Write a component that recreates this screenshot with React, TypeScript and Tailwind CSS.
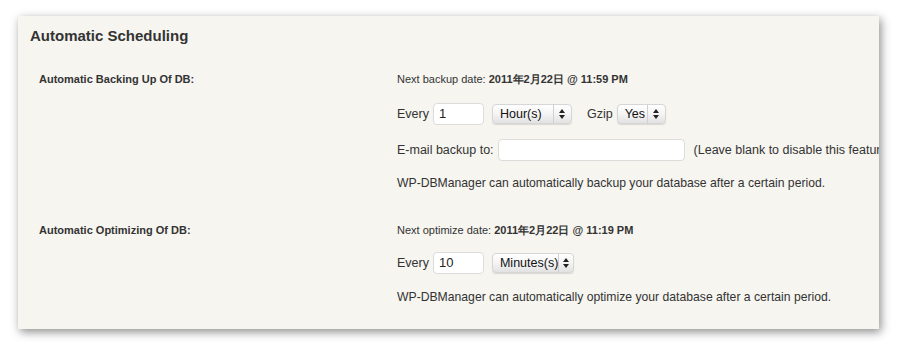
import React from "react";

function Arrows() {
  return (
    <svg width="6" height="10" viewBox="0 0 6 10" className="block">
      <path d="M3 0 L6 4 L0 4 Z" fill="#222" />
      <path d="M0 6 L6 6 L3 10 Z" fill="#222" />
    </svg>
  );
}

function FakeSelect({ label, width }: { label: string; width: string }) {
  return (
    <div
      className={`${width} h-[20px] flex items-center rounded-[4px] border border-[#d6d6d6] bg-gradient-to-b from-[#ffffff] via-[#f4f4f4] to-[#e2e2e2] shadow-[0_1px_1px_rgba(0,0,0,0.12)] text-[12.5px] text-[#111]`}
    >
      <span className="flex-1 pl-[7px] leading-none">{label}</span>
      <span className="h-full w-px bg-[#d0d0d0]" />
      <span className="w-[17px] flex justify-center">
        <Arrows />
      </span>
    </div>
  );
}

function TextBox({ value, width }: { value?: string; width: string }) {
  return (
    <div
      className={`${width} h-[22px] flex items-center rounded-[4px] border border-[#dcdcdc] bg-white px-[5px] text-[13px] text-[#222]`}
    >
      {value}
    </div>
  );
}

export default function App() {
  return (
    <div className="w-[898px] h-[348px] bg-white pt-[16px] pl-[18px] overflow-hidden font-['Liberation_Sans',Arial,sans-serif] text-[#333]">
      <div className="w-[861px] h-[313px] bg-[#f6f5f0] shadow-[2px_3px_9px_rgba(0,0,0,0.45)] overflow-hidden">
        <h2 className="pl-[12px] pt-[11px] text-[15px] font-bold text-[#333] leading-[18px]">
          Automatic Scheduling
        </h2>

        <div className="flex pt-[27px]">
          <div className="w-[379px] shrink-0 pl-[21px] text-[11px] font-bold leading-[14px]">
            Automatic Backing Up Of DB:
          </div>
          <div className="flex flex-col whitespace-nowrap">
            <div className="text-[11px] leading-[14px]">
              Next backup date: <b>2011年2月22日 @ 11:59 PM</b>
            </div>
            <div className="flex items-center mt-[17px] text-[12.5px]">
              <span className="mr-[4px]">Every</span>
              <TextBox value="1" width="w-[51px]" />
              <div className="ml-[8px]">
                <FakeSelect label="Hour(s)" width="w-[80px]" />
              </div>
              <span className="ml-[15px] mr-[4px]">Gzip</span>
              <FakeSelect label="Yes" width="w-[49px]" />
            </div>
            <div className="flex items-center mt-[14px] text-[12.5px]">
              <span className="mr-[4px]">E-mail backup to:</span>
              <TextBox width="w-[187px]" />
              <span className="ml-[9px]">(Leave blank to disable this feature)</span>
            </div>
            <div className="mt-[14px] text-[12.2px] leading-[16px]">
              WP-DBManager can automatically backup your database after a certain period.
            </div>
          </div>
        </div>

        <div className="flex pt-[32px]">
          <div className="w-[379px] shrink-0 pl-[21px] text-[11px] font-bold leading-[14px]">
            Automatic Optimizing Of DB:
          </div>
          <div className="flex flex-col whitespace-nowrap">
            <div className="text-[11px] leading-[14px]">
              Next optimize date: <b>2011年2月22日 @ 11:19 PM</b>
            </div>
            <div className="flex items-center mt-[15px] text-[12.5px]">
              <span className="mr-[4px]">Every</span>
              <TextBox value="10" width="w-[51px]" />
              <div className="ml-[8px]">
                <FakeSelect label="Minutes(s)" width="w-[82px]" />
              </div>
            </div>
            <div className="mt-[15px] text-[12.2px] leading-[16px]">
              WP-DBManager can automatically optimize your database after a certain period.
            </div>
          </div>
        </div>
      </div>
    </div>
  );
}
